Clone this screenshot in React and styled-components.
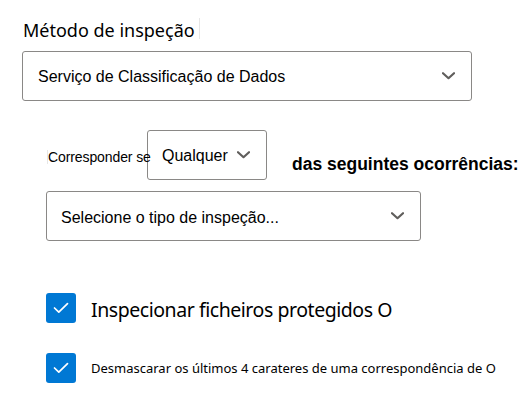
import React from "react";
import styled, { createGlobalStyle } from "styled-components";

const Global = createGlobalStyle`
  html, body { margin: 0; padding: 0; background: #ffffff; }
  body { font-family: "Liberation Sans", Arial, sans-serif; color: #000; }
`;

const Page = styled.div`
  width: 523px;
  height: 408px;
  box-sizing: border-box;
  padding: 18px 0 0 22px;
  display: flex;
  flex-direction: column;
`;

const Title = styled.div`
  font-family: "Noto Sans", "Open Sans", sans-serif;
  font-size: 18px;
  line-height: 24px;
  height: 24px;
  padding-left: 1px;
  color: #000;
  display: flex;
  align-items: flex-start;
`;

const TitleText = styled.span`
  display: inline-block;
  padding-right: 4px;
  border-right: 1px solid #e6e6e6;
  height: 21px;
`;

const Select = styled.div`
  box-sizing: border-box;
  width: ${(p) => p.$w}px;
  height: 50px;
  border: 1px solid #8a8886;
  border-radius: 3px;
  display: flex;
  align-items: center;
  justify-content: space-between;
  padding: 0 ${(p) => p.$pr || 16}px 0 ${(p) => p.$pl || 15}px;
  margin-top: ${(p) => p.$mt || 0}px;
  background: #fff;
  flex-shrink: 0;
`;

const SelectText = styled.span`
  font-family: "Liberation Sans", Arial, sans-serif;
  font-size: 16px;
  color: #000;
  white-space: nowrap;
  margin-top: ${(p) => p.$dy || 0}px;
`;

const Indent = styled.div`
  padding-left: 24px;
  display: flex;
  flex-direction: column;
`;

const MatchRow = styled.div`
  display: flex;
  align-items: center;
  margin-top: 29px;
  height: 50px;
`;

const MatchLabel = styled.span`
  width: 99px;
  margin-left: 1px;
  white-space: nowrap;
  font-size: 14px;
  letter-spacing: -0.1px;
  line-height: 14px;
  border-left: 1px solid #e6e6e6;
  margin-top: 4px;
  position: relative;
  z-index: 1;
`;

const Trailing = styled.span`
  margin-left: 25px;
  font-weight: bold;
  font-size: 17.5px;
  margin-top: 19px;
  white-space: nowrap;
`;

const CheckRow = styled.label`
  display: flex;
  align-items: center;
  gap: 15px;
  margin-top: ${(p) => p.$mt}px;
  height: 30px;
`;

const Box = styled.span`
  width: 30px;
  height: 30px;
  border-radius: 3px;
  background: #0078d4;
  display: flex;
  align-items: center;
  justify-content: center;
  flex-shrink: 0;
`;

const CheckText = styled.span`
  font-family: "Noto Sans", "Open Sans", sans-serif;
  font-size: ${(p) => p.$size}px;
  letter-spacing: ${(p) => p.$ls || 0}px;
  color: #000;
  white-space: nowrap;
  margin-top: ${(p) => p.$dy || 0}px;
`;

const Chevron = ({ color = "#605e5c" }) => (
  <svg width="13" height="8" viewBox="0 0 13 8">
    <polyline
      points="1,1.2 6.5,6.2 12,1.2"
      fill="none"
      stroke={color}
      strokeWidth="2.2"
      strokeLinecap="round"
      strokeLinejoin="round"
    />
  </svg>
);

const Check = () => (
  <svg width="16" height="12" viewBox="0 0 16 12">
    <polyline
      points="1.5,6 5.8,10.2 14.5,1.6"
      fill="none"
      stroke="#fff"
      strokeWidth="1.7"
      strokeLinecap="round"
      strokeLinejoin="round"
    />
  </svg>
);

export default function App() {
  return (
    <>
      <Global />
      <Page>
        <Title>
          <TitleText>Método de inspeção</TitleText>
        </Title>
        <Select $w={450} $mt={9} $pl={15} $pr={16}>
          <SelectText $dy={2}>Serviço de Classificação de Dados</SelectText>
          <Chevron />
        </Select>
        <Indent>
          <MatchRow>
            <MatchLabel>Corresponder se</MatchLabel>
            <Select $w={120} $pl={14} $pr={16}>
              <SelectText $dy={1}>Qualquer</SelectText>
              <Chevron />
            </Select>
            <Trailing>das seguintes ocorrências:</Trailing>
          </MatchRow>
          <Select $w={375} $mt={11} $pl={14} $pr={16}>
            <SelectText $dy={3}>Selecione o tipo de inspeção...</SelectText>
            <Chevron />
          </Select>
          <CheckRow $mt={52}>
            <Box>
              <Check />
            </Box>
            <CheckText $size={19.5} $ls={-0.45} $dy={2}>Inspecionar ficheiros protegidos O</CheckText>
          </CheckRow>
          <CheckRow $mt={30}>
            <Box>
              <Check />
            </Box>
            <CheckText $size={13} $dy={0}>Desmascarar os últimos 4 carateres de uma correspondência de O</CheckText>
          </CheckRow>
        </Indent>
      </Page>
    </>
  );
}
